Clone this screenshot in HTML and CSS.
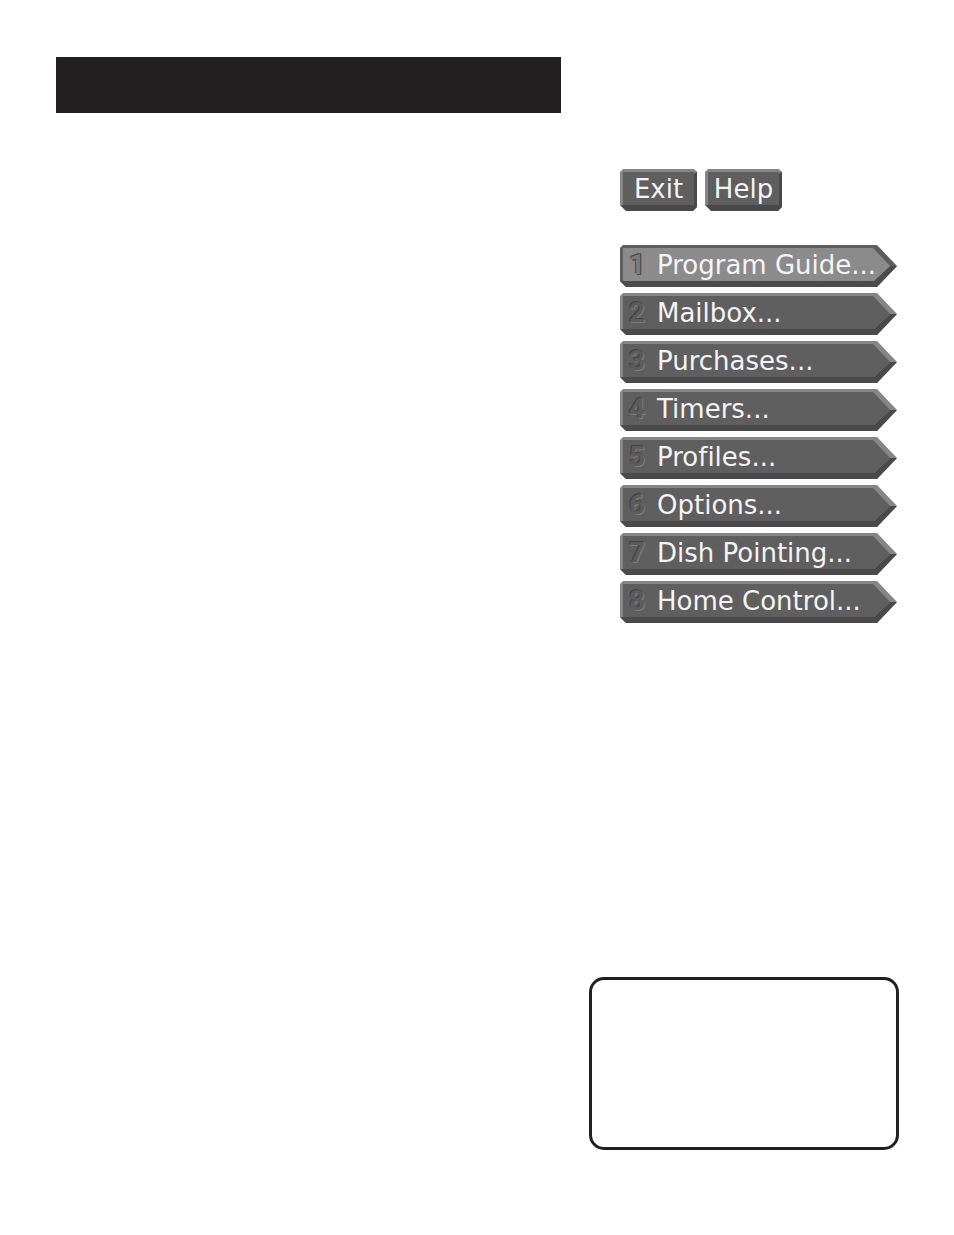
FILE: index.html
```html
<!DOCTYPE html>
<html lang="en">
<head>
    <meta charset="UTF-8">
    <meta name="viewport" content="width=device-width, initial-scale=1.0">
    <title>Main Menu</title>
    <link rel="stylesheet" href="styles.css">
</head>
<body>
    <div class="page">
        <header class="banner"></header>
        <main class="side">
            <div class="toolbar">
                <button class="key" type="button"><span class="label">Exit</span></button>
                <button class="key" type="button"><span class="label">Help</span></button>
            </div>
            <nav class="menu">
                <button class="key arrow active" type="button"><span class="number">1</span><span class="label">Program Guide...</span></button>
                <button class="key arrow" type="button"><span class="number">2</span><span class="label">Mailbox...</span></button>
                <button class="key arrow" type="button"><span class="number">3</span><span class="label">Purchases...</span></button>
                <button class="key arrow" type="button"><span class="number">4</span><span class="label">Timers...</span></button>
                <button class="key arrow" type="button"><span class="number">5</span><span class="label">Profiles...</span></button>
                <button class="key arrow" type="button"><span class="number">6</span><span class="label">Options...</span></button>
                <button class="key arrow" type="button"><span class="number">7</span><span class="label">Dish Pointing...</span></button>
                <button class="key arrow" type="button"><span class="number">8</span><span class="label">Home Control...</span></button>
            </nav>
            <section class="note"></section>
        </main>
    </div>
</body>
</html>
```
FILE: styles.css
```css
* {
    box-sizing: border-box;
}
body {
    margin: 0;
    background-color: #fff;
    font-family: "DejaVu Sans", Verdana, sans-serif;
}
.page {
    display: grid;
    grid-template-columns: 1fr 310px;
    gap: 28px;
    min-height: 100vh;
    padding: 57px 55px 85px 56px;
}
.banner {
    height: 56px;
    background-color: #231f20;
}
.side {
    display: flex;
    flex-direction: column;
    padding-top: 112px;
}
.toolbar {
    display: flex;
    gap: 8px;
    margin: 0 0 34px 31px;
}
.menu {
    display: flex;
    flex-direction: column;
    gap: 6px;
    margin: 0 2px 40px 31px;
}

/* bevelled keys: light base, dark lower edge, flat face on top */
.key {
    --face: #5f5f5f;
    --light: #868686;
    --dark: #494949;
    position: relative;
    display: flex;
    align-items: center;
    justify-content: center;
    min-width: 77px;
    height: 42px;
    padding: 0 8px 2px;
    border: none;
    background-color: var(--light);
    color: #f4f4f4;
    font-family: inherit;
    font-size: 26px;
    font-variant-ligatures: none;
    line-height: 32px;
    white-space: nowrap;
    cursor: pointer;
    clip-path: polygon(3px 0, calc(100% - 3px) 0, 100% 3px, 100% calc(100% - 4px), calc(100% - 4px) 100%, 6px 100%, 0 calc(100% - 6px), 0 3px);
}
.key::before,
.key::after {
    content: "";
    position: absolute;
    inset: 0;
}
.key::before {
    background-color: var(--dark);
    clip-path: polygon(100% 2px, 100% 100%, 6px 100%, 0 calc(100% - 6px), calc(100% - 3px) calc(100% - 6px), calc(100% - 3px) 5px);
}
.key::after {
    background-color: var(--face);
    clip-path: polygon(3px 3px, calc(100% - 3px) 3px, calc(100% - 3px) calc(100% - 6px), 3px calc(100% - 6px));
}
.label,
.number {
    position: relative;
    z-index: 1;
}

.arrow {
    justify-content: flex-start;
    padding-left: 9px;
    padding-right: 0;
    clip-path: polygon(3px 0, calc(100% - 20px) 0, 100% 50%, calc(100% - 20px) 100%, 6px 100%, 0 calc(100% - 6px), 0 3px);
}
.arrow::before {
    clip-path: polygon(0 calc(100% - 6px), calc(100% - 23px) calc(100% - 6px), calc(100% - 7px) 50%, 100% 50%, 100% 100%, 0 100%);
}
.arrow::after {
    clip-path: polygon(3px 3px, calc(100% - 24px) 3px, calc(100% - 7px) 50%, calc(100% - 23px) calc(100% - 6px), 3px calc(100% - 6px));
}
.arrow.active {
    --face: #8b8b8b;
    --light: #5e5e5e;
    --dark: #4c4c4c;
}

.number {
    width: 28px;
    color: #5c5c5c;
    font-family: Roboto, Arial, sans-serif;
    font-size: 28px;
    font-weight: bold;
    text-align: left;
    text-shadow: -1px -1px 0 #434343, 1px 1px 0 #7c7c7c;
}
.active .number {
    color: #7c7c7c;
    text-shadow: -1px -1px 0 #4a4a4a, 1px 1px 0 #4a4a4a, 1px -1px 0 #4a4a4a;
}

.note {
    min-height: 173px;
    margin-top: auto;
    border: 3px solid #231f20;
    border-radius: 15px;
}
```
